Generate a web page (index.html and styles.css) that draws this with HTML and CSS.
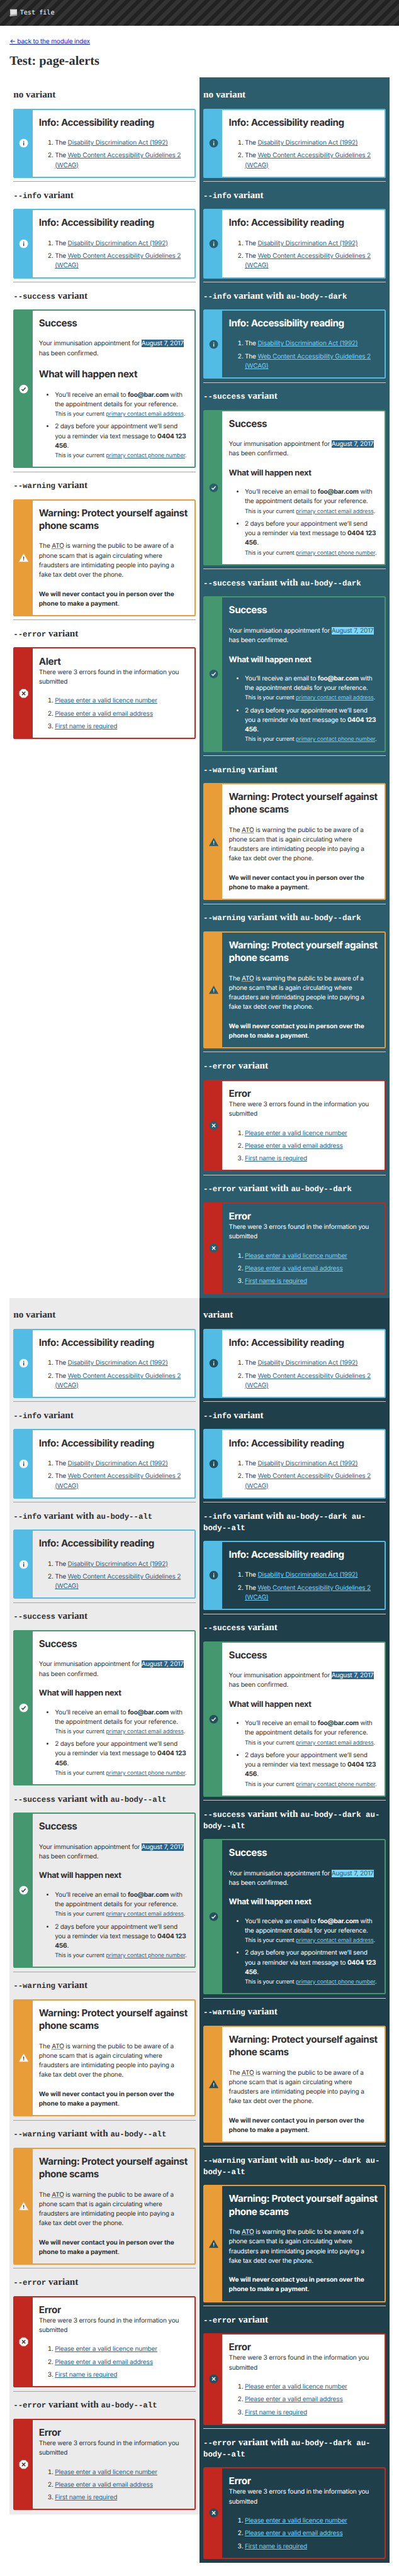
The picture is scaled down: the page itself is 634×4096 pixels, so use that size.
FILE: index.html
```
<!DOCTYPE html>
<html lang="en">
<head>
<meta charset="utf-8">
<title>Test: page-alerts</title>
<link rel="stylesheet" href="styles.css">
</head>
<body>
<svg class="sprite" xmlns="http://www.w3.org/2000/svg">
<symbol id="i-info" viewBox="0 0 24 24"><circle class="shape" cx="12" cy="12" r="11"/><rect class="glyph" x="11" y="10.2" width="2.1" height="7.4"/><rect class="glyph" x="11" y="6.6" width="2.1" height="2.1"/></symbol>
<symbol id="i-success" viewBox="0 0 24 24"><circle class="shape" cx="12" cy="12" r="11"/><path class="line" d="M7 12.6l3.2 3.2 6.6-7.6"/></symbol>
<symbol id="i-warning" viewBox="0 0 24 24"><path class="shape" d="M12 2L24 22.5H0z"/><rect class="glyph" x="11" y="9.8" width="2" height="5.8"/><rect class="glyph" x="11" y="16.8" width="2" height="2"/></symbol>
<symbol id="i-error" viewBox="0 0 24 24"><path class="shape" d="M7.5 1h9L23 7.5v9L16.5 23h-9L1 16.5v-9z"/><path class="line" d="M8 8l8 8M16 8l-8 8"/></symbol>
</svg>

<header class="header">
<svg class="sheet" viewBox="0 0 20 20"><path d="M1.5 1H19v13.5L2 16z" fill="#d4d4d4"/><path d="M4 3.5h12.500v8L4 12.500z" fill="#e2e2e2"/><path d="M0 16.200L19 13v4L1 19.500z" fill="#a5a5a5"/></svg>
<span>Test file</span>
</header>

<main class="main">
<p class="back"><a href="#">← back to the module index</a></p>
<h1 class="title">Test: page-alerts</h1>

<div class="row">
<section class="body">
<h2>no variant</h2>
<div class="alert info"><div class="band"><svg class="icon"><use href="#i-info"/></svg></div><div class="content">
<h3>Info: Accessibility reading</h3>
<ol><li>The <a href="#">Disability Discrimination Act (1992)</a></li><li>The <a href="#">Web Content Accessibility Guidelines 2 (<abbr>WCAG</abbr>)</a></li></ol>
</div></div>
<hr>
<h2><code>--info</code> variant</h2>
<div class="alert info"><div class="band"><svg class="icon"><use href="#i-info"/></svg></div><div class="content">
<h3>Info: Accessibility reading</h3>
<ol><li>The <a href="#">Disability Discrimination Act (1992)</a></li><li>The <a href="#">Web Content Accessibility Guidelines 2 (<abbr>WCAG</abbr>)</a></li></ol>
</div></div>
<hr>
<h2><code>--success</code> variant</h2>
<div class="alert success"><div class="band"><svg class="icon"><use href="#i-success"/></svg></div><div class="content">
<h3>Success</h3>
<p>Your immunisation appointment for <mark>August 7, 2017</mark> has been confirmed.</p>
<h3 class="next">What will happen next</h3>
<ul><li>You’ll receive an email to <strong>foo@bar.com</strong> with the appointment details for your reference. <small>This is your current <a href="#">primary contact email address</a>.</small></li><li>2 days before your appointment we’ll send you a reminder via text message to <strong>0404 123 456</strong>. <small>This is your current <a href="#">primary contact phone number</a>.</small></li></ul>
</div></div>
<hr>
<h2><code>--warning</code> variant</h2>
<div class="alert warning"><div class="band"><svg class="icon"><use href="#i-warning"/></svg></div><div class="content">
<h3>Warning: Protect yourself against phone scams</h3>
<p>The <abbr>ATO</abbr> is warning the public to be aware of a<br>phone scam that is again circulating where<br>fraudsters are intimidating people into paying a<br>fake tax debt over the phone.</p>
<p><strong>We will never contact you in person over the phone to make a payment</strong>.</p>
</div></div>
<hr>
<h2><code>--error</code> variant</h2>
<div class="alert error"><div class="band"><svg class="icon"><use href="#i-error"/></svg></div><div class="content">
<h3>Alert</h3>
<p class="tight">There were 3 errors found in the information you submitted</p>
<ol><li><a href="#">Please enter a valid licence number</a></li><li><a href="#">Please enter a valid email address</a></li><li><a href="#">First name is required</a></li></ol>
</div></div>
</section>

<section class="body dark">
<h2>no variant</h2>
<div class="alert info"><div class="band"><svg class="icon"><use href="#i-info"/></svg></div><div class="content">
<h3>Info: Accessibility reading</h3>
<ol><li>The <a href="#">Disability Discrimination Act (1992)</a></li><li>The <a href="#">Web Content Accessibility Guidelines 2 (<abbr>WCAG</abbr>)</a></li></ol>
</div></div>
<hr>
<h2><code>--info</code> variant</h2>
<div class="alert info"><div class="band"><svg class="icon"><use href="#i-info"/></svg></div><div class="content">
<h3>Info: Accessibility reading</h3>
<ol><li>The <a href="#">Disability Discrimination Act (1992)</a></li><li>The <a href="#">Web Content Accessibility Guidelines 2 (<abbr>WCAG</abbr>)</a></li></ol>
</div></div>
<hr>
<h2><code>--info</code> variant with <code>au-body--dark</code></h2>
<div class="alert info flat"><div class="band"><svg class="icon"><use href="#i-info"/></svg></div><div class="content">
<h3>Info: Accessibility reading</h3>
<ol><li>The <a href="#">Disability Discrimination Act (1992)</a></li><li>The <a href="#">Web Content Accessibility Guidelines 2 (<abbr>WCAG</abbr>)</a></li></ol>
</div></div>
<hr>
<h2><code>--success</code> variant</h2>
<div class="alert success"><div class="band"><svg class="icon"><use href="#i-success"/></svg></div><div class="content">
<h3>Success</h3>
<p>Your immunisation appointment for <mark>August 7, 2017</mark> has been confirmed.</p>
<h4 class="next">What will happen next</h4>
<ul><li>You’ll receive an email to <strong>foo@bar.com</strong> with the appointment details for your reference. <small>This is your current <a href="#">primary contact email address</a>.</small></li><li>2 days before your appointment we’ll send you a reminder via text message to <strong>0404 123 456</strong>. <small>This is your current <a href="#">primary contact phone number</a>.</small></li></ul>
</div></div>
<hr>
<h2><code>--success</code> variant with <code>au-body--dark</code></h2>
<div class="alert success flat"><div class="band"><svg class="icon"><use href="#i-success"/></svg></div><div class="content">
<h3>Success</h3>
<p>Your immunisation appointment for <mark>August 7, 2017</mark> has been confirmed.</p>
<h4 class="next">What will happen next</h4>
<ul><li>You’ll receive an email to <strong>foo@bar.com</strong> with the appointment details for your reference. <small>This is your current <a href="#">primary contact email address</a>.</small></li><li>2 days before your appointment we’ll send you a reminder via text message to <strong>0404 123 456</strong>. <small>This is your current <a href="#">primary contact phone number</a>.</small></li></ul>
</div></div>
<hr>
<h2><code>--warning</code> variant</h2>
<div class="alert warning"><div class="band"><svg class="icon"><use href="#i-warning"/></svg></div><div class="content">
<h3>Warning: Protect yourself against phone scams</h3>
<p>The <abbr>ATO</abbr> is warning the public to be aware of a<br>phone scam that is again circulating where<br>fraudsters are intimidating people into paying a<br>fake tax debt over the phone.</p>
<p><strong>We will never contact you in person over the phone to make a payment</strong>.</p>
</div></div>
<hr>
<h2><code>--warning</code> variant with <code>au-body--dark</code></h2>
<div class="alert warning flat"><div class="band"><svg class="icon"><use href="#i-warning"/></svg></div><div class="content">
<h3>Warning: Protect yourself against phone scams</h3>
<p>The <abbr>ATO</abbr> is warning the public to be aware of a<br>phone scam that is again circulating where<br>fraudsters are intimidating people into paying a<br>fake tax debt over the phone.</p>
<p><strong>We will never contact you in person over the phone to make a payment</strong>.</p>
</div></div>
<hr>
<h2><code>--error</code> variant</h2>
<div class="alert error"><div class="band"><svg class="icon"><use href="#i-error"/></svg></div><div class="content">
<h3>Error</h3>
<p class="tight">There were 3 errors found in the information you submitted</p>
<ol><li><a href="#">Please enter a valid licence number</a></li><li><a href="#">Please enter a valid email address</a></li><li><a href="#">First name is required</a></li></ol>
</div></div>
<hr>
<h2><code>--error</code> variant with <code>au-body--dark</code></h2>
<div class="alert error flat"><div class="band"><svg class="icon"><use href="#i-error"/></svg></div><div class="content">
<h3>Error</h3>
<p class="tight">There were 3 errors found in the information you submitted</p>
<ol><li><a href="#">Please enter a valid licence number</a></li><li><a href="#">Please enter a valid email address</a></li><li><a href="#">First name is required</a></li></ol>
</div></div>
</section>
</div>

<div class="row">
<section class="body alt">
<h2>no variant</h2>
<div class="alert info"><div class="band"><svg class="icon"><use href="#i-info"/></svg></div><div class="content">
<h3>Info: Accessibility reading</h3>
<ol><li>The <a href="#">Disability Discrimination Act (1992)</a></li><li>The <a href="#">Web Content Accessibility Guidelines 2 (<abbr>WCAG</abbr>)</a></li></ol>
</div></div>
<hr>
<h2><code>--info</code> variant</h2>
<div class="alert info"><div class="band"><svg class="icon"><use href="#i-info"/></svg></div><div class="content">
<h3>Info: Accessibility reading</h3>
<ol><li>The <a href="#">Disability Discrimination Act (1992)</a></li><li>The <a href="#">Web Content Accessibility Guidelines 2 (<abbr>WCAG</abbr>)</a></li></ol>
</div></div>
<hr>
<h2><code>--info</code> variant with <code>au-body--alt</code></h2>
<div class="alert info flat"><div class="band"><svg class="icon"><use href="#i-info"/></svg></div><div class="content">
<h3>Info: Accessibility reading</h3>
<ol><li>The <a href="#">Disability Discrimination Act (1992)</a></li><li>The <a href="#">Web Content Accessibility Guidelines 2 (<abbr>WCAG</abbr>)</a></li></ol>
</div></div>
<hr>
<h2><code>--success</code> variant</h2>
<div class="alert success"><div class="band"><svg class="icon"><use href="#i-success"/></svg></div><div class="content">
<h3>Success</h3>
<p>Your immunisation appointment for <mark>August 7, 2017</mark> has been confirmed.</p>
<h4 class="next">What will happen next</h4>
<ul><li>You’ll receive an email to <strong>foo@bar.com</strong> with the appointment details for your reference. <small>This is your current <a href="#">primary contact email address</a>.</small></li><li>2 days before your appointment we’ll send you a reminder via text message to <strong>0404 123 456</strong>. <small>This is your current <a href="#">primary contact phone number</a>.</small></li></ul>
</div></div>
<h2><code>--success</code> variant with <code>au-body--alt</code></h2>
<div class="alert success flat"><div class="band"><svg class="icon"><use href="#i-success"/></svg></div><div class="content">
<h3>Success</h3>
<p>Your immunisation appointment for <mark>August 7, 2017</mark> has been confirmed.</p>
<h4 class="next">What will happen next</h4>
<ul><li>You’ll receive an email to <strong>foo@bar.com</strong> with the appointment details for your reference. <small>This is your current <a href="#">primary contact email address</a>.</small></li><li>2 days before your appointment we’ll send you a reminder via text message to <strong>0404 123 456</strong>. <small>This is your current <a href="#">primary contact phone number</a>.</small></li></ul>
</div></div>
<hr>
<h2><code>--warning</code> variant</h2>
<div class="alert warning"><div class="band"><svg class="icon"><use href="#i-warning"/></svg></div><div class="content">
<h3>Warning: Protect yourself against phone scams</h3>
<p>The <abbr>ATO</abbr> is warning the public to be aware of a<br>phone scam that is again circulating where<br>fraudsters are intimidating people into paying a<br>fake tax debt over the phone.</p>
<p><strong>We will never contact you in person over the phone to make a payment</strong>.</p>
</div></div>
<hr>
<h2><code>--warning</code> variant with <code>au-body--alt</code></h2>
<div class="alert warning flat"><div class="band"><svg class="icon"><use href="#i-warning"/></svg></div><div class="content">
<h3>Warning: Protect yourself against phone scams</h3>
<p>The <abbr>ATO</abbr> is warning the public to be aware of a<br>phone scam that is again circulating where<br>fraudsters are intimidating people into paying a<br>fake tax debt over the phone.</p>
<p><strong>We will never contact you in person over the phone to make a payment</strong>.</p>
</div></div>
<hr>
<h2><code>--error</code> variant</h2>
<div class="alert error"><div class="band"><svg class="icon"><use href="#i-error"/></svg></div><div class="content">
<h3>Error</h3>
<p class="tight">There were 3 errors found in the information you submitted</p>
<ol><li><a href="#">Please enter a valid licence number</a></li><li><a href="#">Please enter a valid email address</a></li><li><a href="#">First name is required</a></li></ol>
</div></div>
<hr>
<h2><code>--error</code> variant with <code>au-body--alt</code></h2>
<div class="alert error flat"><div class="band"><svg class="icon"><use href="#i-error"/></svg></div><div class="content">
<h3>Error</h3>
<p class="tight">There were 3 errors found in the information you submitted</p>
<ol><li><a href="#">Please enter a valid licence number</a></li><li><a href="#">Please enter a valid email address</a></li><li><a href="#">First name is required</a></li></ol>
</div></div>
</section>

<section class="body dark dark-alt">
<h2>variant</h2>
<div class="alert info"><div class="band"><svg class="icon"><use href="#i-info"/></svg></div><div class="content">
<h3>Info: Accessibility reading</h3>
<ol><li>The <a href="#">Disability Discrimination Act (1992)</a></li><li>The <a href="#">Web Content Accessibility Guidelines 2 (<abbr>WCAG</abbr>)</a></li></ol>
</div></div>
<hr>
<h2><code>--info</code> variant</h2>
<div class="alert info"><div class="band"><svg class="icon"><use href="#i-info"/></svg></div><div class="content">
<h3>Info: Accessibility reading</h3>
<ol><li>The <a href="#">Disability Discrimination Act (1992)</a></li><li>The <a href="#">Web Content Accessibility Guidelines 2 (<abbr>WCAG</abbr>)</a></li></ol>
</div></div>
<hr>
<h2><code>--info</code> variant with <code>au-body--dark au-<br>body--alt</code></h2>
<div class="alert info flat"><div class="band"><svg class="icon"><use href="#i-info"/></svg></div><div class="content">
<h3>Info: Accessibility reading</h3>
<ol><li>The <a href="#">Disability Discrimination Act (1992)</a></li><li>The <a href="#">Web Content Accessibility Guidelines 2 (<abbr>WCAG</abbr>)</a></li></ol>
</div></div>
<hr>
<h2><code>--success</code> variant</h2>
<div class="alert success"><div class="band"><svg class="icon"><use href="#i-success"/></svg></div><div class="content">
<h3>Success</h3>
<p>Your immunisation appointment for <mark>August 7, 2017</mark> has been confirmed.</p>
<h4 class="next">What will happen next</h4>
<ul><li>You’ll receive an email to <strong>foo@bar.com</strong> with the appointment details for your reference. <small>This is your current <a href="#">primary contact email address</a>.</small></li><li>2 days before your appointment we’ll send you a reminder via text message to <strong>0404 123 456</strong>. <small>This is your current <a href="#">primary contact phone number</a>.</small></li></ul>
</div></div>
<hr>
<h2><code>--success</code> variant with <code>au-body--dark au-<br>body--alt</code></h2>
<div class="alert success flat"><div class="band"><svg class="icon"><use href="#i-success"/></svg></div><div class="content">
<h3>Success</h3>
<p>Your immunisation appointment for <mark>August 7, 2017</mark> has been confirmed.</p>
<h4 class="next">What will happen next</h4>
<ul><li>You’ll receive an email to <strong>foo@bar.com</strong> with the appointment details for your reference. <small>This is your current <a href="#">primary contact email address</a>.</small></li><li>2 days before your appointment we’ll send you a reminder via text message to <strong>0404 123 456</strong>. <small>This is your current <a href="#">primary contact phone number</a>.</small></li></ul>
</div></div>
<hr>
<h2><code>--warning</code> variant</h2>
<div class="alert warning"><div class="band"><svg class="icon"><use href="#i-warning"/></svg></div><div class="content">
<h3>Warning: Protect yourself against phone scams</h3>
<p>The <abbr>ATO</abbr> is warning the public to be aware of a<br>phone scam that is again circulating where<br>fraudsters are intimidating people into paying a<br>fake tax debt over the phone.</p>
<p><strong>We will never contact you in person over the phone to make a payment</strong>.</p>
</div></div>
<hr>
<h2><code>--warning</code> variant with <code>au-body--dark au-<br>body--alt</code></h2>
<div class="alert warning flat"><div class="band"><svg class="icon"><use href="#i-warning"/></svg></div><div class="content">
<h3>Warning: Protect yourself against phone scams</h3>
<p>The <abbr>ATO</abbr> is warning the public to be aware of a<br>phone scam that is again circulating where<br>fraudsters are intimidating people into paying a<br>fake tax debt over the phone.</p>
<p><strong>We will never contact you in person over the phone to make a payment</strong>.</p>
</div></div>
<hr>
<h2><code>--error</code> variant</h2>
<div class="alert error"><div class="band"><svg class="icon"><use href="#i-error"/></svg></div><div class="content">
<h3>Error</h3>
<p class="tight">There were 3 errors found in the information you submitted</p>
<ol><li><a href="#">Please enter a valid licence number</a></li><li><a href="#">Please enter a valid email address</a></li><li><a href="#">First name is required</a></li></ol>
</div></div>
<hr>
<h2><code>--error</code> variant with <code>au-body--dark au-<br>body--alt</code></h2>
<div class="alert error flat"><div class="band"><svg class="icon"><use href="#i-error"/></svg></div><div class="content">
<h3>Error</h3>
<p class="tight">There were 3 errors found in the information you submitted</p>
<ol><li><a href="#">Please enter a valid licence number</a></li><li><a href="#">Please enter a valid email address</a></li><li><a href="#">First name is required</a></li></ol>
</div></div>
</section>
</div>
</main>
</body>
</html>
```
FILE: styles.css
```
html {
  font-size: 10.144px;
}

body {
  margin: 0;
  background: #fff;
  color: #313131;
  font-family: Inter, "Liberation Sans", sans-serif;
  font-size: 1rem;
  line-height: 1.5rem;
  letter-spacing: -0.0205em;
  text-rendering: geometricPrecision;
}

.sprite {
  position: absolute;
  width: 0;
  height: 0;
}

.header {
  display: flex;
  align-items: center;
  gap: .375rem;
  box-sizing: border-box;
  height: 4rem;
  padding: 0 1.5rem;
  background: repeating-linear-gradient(-45deg, #222, #222 .625rem, #333 .625rem, #333 1.25rem);
  color: #fff;
  font-family: "DejaVu Sans Mono", monospace;
  letter-spacing: 0;
}

.sheet {
  width: 1.25rem;
  height: 1.25rem;
}

.main {
  padding: 1.8rem 1.5rem 0;
}

.back {
  margin: 0;
}

.back a {
  color: #0d1fe0;
  text-decoration-thickness: 1px;
}

.title {
  margin: 1.22rem 0 1.345rem;
  font: bold 2rem/2.3rem "Liberation Serif", serif;
  letter-spacing: 0;
}

.row {
  display: flex;
  align-items: flex-start;
}

.body {
  --shape: #fff;
  --glyph: #313131;
  box-sizing: border-box;
  width: 50%;
  padding: .595rem;
}

.alt {
  --shape: #f5f5f5;
  background: #ebebeb;
}

.dark {
  --shape: #2c5d6c;
  --glyph: #fff;
  background: #2c5d6c;
  color: #fff;
}

.dark-alt {
  --shape: #264f5e;
  background: #1f404b;
}

h2 {
  margin: 1.251rem 0;
  font: bold 1.5rem/1.75rem "Liberation Serif", serif;
  letter-spacing: 0;
  white-space: nowrap;
}

h2 code {
  font: bold 1.21875rem/1 "Liberation Mono", monospace;
}

hr {
  height: 0;
  margin: calc(.625rem - 1px) 0 .5rem;
  border: 0;
  border-top: 1px solid #a3a3a3;
}

.dark hr {
  border-color: #ccc;
}

.alert {
  display: flex;
  box-sizing: border-box;
  border: 2px solid var(--tone);
  border-radius: .25rem;
  background: var(--tone);
  color: #313131;
}

.info { --tone: #53bce4; }
.success { --tone: #45976f; }
.warning { --tone: #e89d38; }
.error { --tone: #c2281f; }

.band {
  display: flex;
  flex: none;
  align-items: center;
  justify-content: center;
  width: calc(3rem - 2px);
}

.icon {
  width: 1.5rem;
  height: 1.5rem;
}

.shape { fill: var(--shape); }
.glyph { fill: var(--glyph); }

.line {
  fill: none;
  stroke: var(--glyph);
  stroke-width: 2.2;
}

.content {
  flex: 1;
  min-width: 0;
  padding: calc(1.1875rem - 2px) calc(1.1rem - 2px) calc(1.1875rem - 2px) 1rem;
  background: #fff;
}

.alt .flat .content {
  background: #ebebeb;
}

.dark .flat .content {
  background: #2c5d6c;
  color: #fff;
}

.dark-alt .flat .content {
  background: #1f404b;
}

h3 {
  margin: 0;
  font-size: 1.5rem;
  line-height: 2rem;
  letter-spacing: -0.0258em;
}

h4 {
  margin: 0;
  font-size: 1.25rem;
  line-height: 1.5rem;
  letter-spacing: -0.0234em;
}

.content p,
.next,
ol,
ul {
  margin: 1.5rem 0 0;
}

.content .tight {
  margin: 0;
}

ol,
ul {
  padding-left: 2.5rem;
}

li + li {
  margin-top: .5rem;
}

strong {
  letter-spacing: -0.0075em;
}

li strong {
  letter-spacing: -0.02em;
}

small {
  display: block;
  font-size: .875rem;
  line-height: 1.5rem;
  letter-spacing: -0.0132em;
  white-space: nowrap;
}

.content a {
  color: #2b658c;
  text-decoration-thickness: 1px;
}

.dark .flat a {
  color: #78d0f5;
}

abbr {
  text-decoration: underline dotted 1px;
}

mark {
  background: #2b658c;
  color: #fff;
  letter-spacing: -0.016em;
}

.dark .flat mark {
  background: #7fd8fc;
  color: #2c5d6c;
}
```
